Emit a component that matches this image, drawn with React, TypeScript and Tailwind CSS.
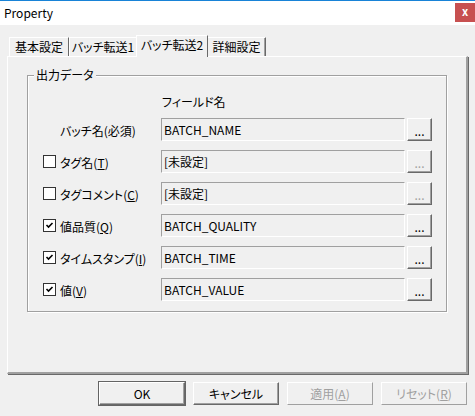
import React from "react";

const font = "font-['Noto_Sans_CJK_JP','Noto_Sans',sans-serif] [font-feature-settings:'palt']";

function Check({ checked }: { checked: boolean }) {
  return (
    <div className="w-[13px] h-[13px] border border-[#333333] bg-white flex items-center justify-center shrink-0">
      {checked && (
        <svg width="9" height="9" viewBox="0 0 9 9">
          <path d="M1.5 4 L3.5 6 L7.5 2" stroke="#000" strokeWidth="1.6" fill="none" />
        </svg>
      )}
    </div>
  );
}

function Dots({ disabled }: { disabled?: boolean }) {
  return (
    <div className="w-[25px] h-[23px] border-t border-l border-white border-b border-r border-b-[#696969] border-r-[#696969] shadow-[inset_-1px_-1px_0_#a0a0a0] bg-[#f0f0f0] flex items-end justify-center pb-[3px]">
      <span className={`text-[12px] leading-[12px] ${disabled ? "text-[#a0a0a0]" : "text-black"}`}>...</span>
    </div>
  );
}

type Row = { check: boolean | null; label: React.ReactNode; value: string; disabled?: boolean };

const U = ({ c }: { c: string }) => <span className="underline">{c}</span>;

const rows: Row[] = [
  { check: null, label: "バッチ名(必須)", value: "BATCH_NAME" },
  { check: false, label: <>タグ名(<U c="T" />)</>, value: "[未設定]", disabled: true },
  { check: false, label: <>タグコメント(<U c="C" />)</>, value: "[未設定]", disabled: true },
  { check: true, label: <>値品質(<U c="Q" />)</>, value: "BATCH_QUALITY" },
  { check: true, label: <>タイムスタンプ(<U c="I" />)</>, value: "BATCH_TIME" },
  { check: true, label: <>値(<U c="V" />)</>, value: "BATCH_VALUE" },
];

function Btn({ children, def, disabled }: { children: React.ReactNode; def?: boolean; disabled?: boolean }) {
  return (
    <div className={`w-[88px] h-[25px] ${def ? "border border-[#646464]" : "border border-transparent"}`}>
      <div
        className={`w-full h-full border-t border-l border-white border-b border-r ${
          disabled ? "border-b-[#a0a0a0] border-r-[#a0a0a0] text-[#a0a0a0]" : "border-b-[#696969] border-r-[#696969] shadow-[inset_-1px_-1px_0_#a0a0a0] text-black"
        } bg-[#f0f0f0] flex items-center justify-center text-[12px]`}
      >
        {children}
      </div>
    </div>
  );
}

export default function App() {
  return (
    <div className={`w-[475px] h-[416px] bg-[#f0f0f0] overflow-hidden flex flex-col ${font}`}>
      {/* title bar */}
      <div className="h-[25px] bg-white border-t border-[#1883d7] flex items-start justify-between shrink-0">
        <span className="ml-[4px] mt-[3px] text-[12px] leading-[17px] text-black">Property</span>
        <div className="mt-[2px] w-[20px] h-[19px] bg-[#c75050] flex items-center justify-center text-white text-[11px] font-bold leading-none pb-[2px]">
          x
        </div>
      </div>

      {/* tabs */}
      <div className="mt-[10px] h-[21px] flex items-end pl-[9px] shrink-0 text-[12px] text-black">
        <div className="w-[60px] h-[19px] border-t border-l border-white border-r border-r-[#696969] flex items-center justify-center">基本設定</div>
        <div className="w-[68px] h-[19px] border-t border-l border-white border-r border-r-[#696969] flex items-center justify-center">バッチ転送1</div>
        <div className="relative z-10 ml-[-1px] w-[72px] h-[22px] mb-[-1px] bg-[#f0f0f0] border-t border-l border-white border-r border-r-[#696969] flex items-center justify-center pb-[3px]">バッチ転送2</div>
        <div className="w-[58px] h-[19px] border-t border-white border-r border-r-[#696969] shadow-[inset_-1px_0_0_#a0a0a0] flex items-center justify-center">詳細設定</div>
      </div>

      {/* panel */}
      <div className="ml-[7px] w-[461px] h-[318px] border-t border-l border-white border-b-2 border-r-2 border-b-[#a0a0a0] border-r-[#a0a0a0] shadow-[1px_1px_0_#696969] shrink-0">
        <div className="relative ml-[19px] mt-[18px] w-[420px] h-[237px] border border-[#a0a0a0] shadow-[inset_1px_1px_0_#fff,1px_1px_0_#fff] pt-[18px]">
          <span className="absolute left-[6px] top-[-9px] px-[2px] bg-[#f0f0f0] text-[12px] leading-[16px] text-black">出力データ</span>
          <div className="h-[16px] ml-[134px] text-[12px] leading-[16px] text-black">フィールド名</div>
          <div className="mt-[8px] flex flex-col gap-[9px]">
            {rows.map((r, i) => (
              <div key={i} className="h-[23px] flex items-center">
                <div className="ml-[15px] w-[13px] flex items-center">
                  {r.check !== null && <Check checked={r.check} />}
                </div>
                <div className="ml-[4px] w-[101px] text-[12px] leading-[16px] text-black whitespace-nowrap pt-[2px]">{r.label}</div>
                <div className="w-[244px] h-[23px] border-t border-l border-[#a0a0a0] border-b border-r border-b-white border-r-white flex items-center pl-[2px] text-[12px] text-black">
                  {r.value}
                </div>
                <div className="ml-[2px]">
                  <Dots disabled={r.disabled} />
                </div>
              </div>
            ))}
          </div>
        </div>
      </div>

      {/* buttons */}
      <div className="mt-[7px] flex justify-end gap-[6px] pr-[7px]">
        <Btn def>OK</Btn>
        <Btn>キャンセル</Btn>
        <Btn disabled>
          適用(<U c="A" />)
        </Btn>
        <Btn disabled>
          リセット(<U c="R" />)
        </Btn>
      </div>
    </div>
  );
}
